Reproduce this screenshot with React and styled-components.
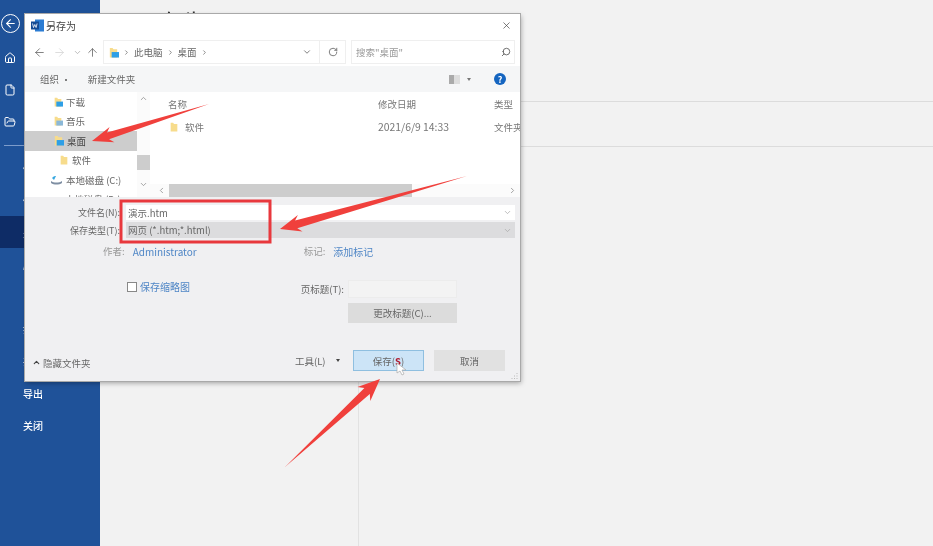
import React from "react";
import styled, { createGlobalStyle } from "styled-components";
import {
  ArrowLeft,
  ArrowRight,
  ArrowUp,
  ChevronDown,
  ChevronLeft,
  ChevronRight,
  ChevronUp,
  File,
  FolderOpen,
  Home,
  RotateCw,
  Search,
  X
} from "lucide-react";

const GlobalStyle = createGlobalStyle`
  html, body {
    margin: 0;
    padding: 0;
    background: #f2f2f2;
  }
  * {
    box-sizing: border-box;
  }
`;

const Page = styled.div`
  position: relative;
  display: flex;
  width: 933px;
  height: 546px;
  overflow: hidden;
  background: #f2f2f2;
  font-family: "Noto Sans CJK SC", "Liberation Sans", sans-serif;
  filter: blur(0.45px);
`;

/* word backstage, mostly hidden by the dialog */
const Sidebar = styled.nav`
  display: flex;
  flex-direction: column;
  flex: 0 0 100px;
  padding-top: 12px;
  background: #1f5299;
  color: #fff;
`;

const BackButton = styled.div`
  display: flex;
  align-items: center;
  justify-content: center;
  width: 19px;
  height: 19px;
  margin: 2px 0 9px 1px;
  border: 1.5px solid #fff;
  border-radius: 50%;
`;

const SideItem = styled.div`
  display: flex;
  align-items: center;
  flex: 0 0 32px;
  margin-top: ${({ $gap }) => $gap || 0}px;
  padding-left: 4px;
  gap: 13px;
  font-size: 10px;
  font-weight: 500;
  background: ${({ $active }) => ($active ? "#0e2c66" : "transparent")};
`;

const SideLabel = styled.span`
  margin-left: ${({ $bare }) => ($bare ? 19 : 0)}px;
`;

const SideRule = styled.div`
  height: 1px;
  margin: 7px 0 6px 4px;
  width: 40px;
  background: #7d9ccb;
`;

const Main = styled.main`
  display: flex;
  flex-direction: column;
  flex: 1;
`;

const MainTitle = styled.h1`
  flex: 0 0 102px;
  margin: 0;
  padding: 7px 0 0 35px;
  font-size: 24px;
  line-height: 30px;
  font-weight: 400;
  color: #333;
  border-bottom: 1px solid #dcdcdc;
`;

const MainStrip = styled.div`
  flex: 0 0 45px;
  border-bottom: 1px solid #dcdcdc;
`;

const MainColumn = styled.div`
  flex: 1;
  width: 259px;
  border-right: 1px solid #e2e2e2;
`;

/* the save-as window floats over the page */
const Dialog = styled.section`
  position: absolute;
  left: 25px;
  top: 14px;
  display: flex;
  flex-direction: column;
  width: 495px;
  height: 367px;
  background: #fff;
  color: #555;
  box-shadow: 0 0 0 1px #a9a9a9, 1px 2px 5px rgba(0, 0, 0, 0.35);
`;

const TitleBar = styled.header`
  display: flex;
  align-items: center;
  flex: 0 0 24px;
  padding: 0 8px 2px 6px;
  font-size: 10px;
  color: #444;
`;

const TitleText = styled.span`
  margin-left: 1px;
  flex: 1;
`;

const AddressRow = styled.div`
  display: flex;
  align-items: center;
  flex: 0 0 28px;
  padding: 0 5px 0 8px;
  color: #666;
`;

const NavIcons = styled.div`
  display: flex;
  align-items: center;
  gap: 7px;
  width: 70px;
`;

const NavTail = styled.div`
  display: flex;
  align-items: center;
  gap: 4px;
`;

const AddressBox = styled.div`
  display: flex;
  align-items: center;
  gap: 4px;
  width: 217px;
  height: 24px;
  padding: 0 7px 0 4px;
  border: 1px solid #efefef;
  font-size: 9.5px;
`;

const Spacer = styled.div`
  flex: 1;
`;

const RefreshBox = styled.div`
  display: flex;
  align-items: center;
  justify-content: center;
  width: 26px;
  height: 24px;
  border: 1px solid #efefef;
  border-left: none;
`;

const SearchBox = styled.div`
  display: flex;
  align-items: center;
  justify-content: space-between;
  width: 164px;
  height: 24px;
  margin-left: 5px;
  padding: 0 3px 0 4px;
  border: 1px solid #efefef;
  font-size: 9.5px;
  color: #999;
`;

const Toolbar = styled.div`
  display: flex;
  align-items: center;
  flex: 0 0 26px;
  padding: 0 14px 0 15px;
  background: #f5f6f7;
  font-size: 9.5px;
  color: #666;
`;

const ToolLabel = styled.span`
  margin-right: 17px;
`;

const ViewIcon = styled.div`
  width: 11px;
  height: 9px;
  margin-right: 7px;
  background: linear-gradient(90deg, #aaa 0 45%, #ddd 45% 100%);
`;

const HelpDot = styled.div`
  display: flex;
  align-items: center;
  justify-content: center;
  width: 12px;
  height: 12px;
  margin-left: 23px;
  border-radius: 50%;
  background: #1565c0;
  color: #fff;
  font-size: 9px;
  font-weight: 700;
`;

const Caret = styled.span`
  width: 0;
  height: 0;
  margin: ${({ $margin }) => $margin || "0"};
  border-left: 2px solid transparent;
  border-right: 2px solid transparent;
  border-top: 3px solid ${({ $color }) => $color || "#777"};
`;

const Browser = styled.div`
  display: flex;
  flex: 0 0 105px;
  overflow: hidden;
`;

const NavPane = styled.div`
  display: flex;
  flex-direction: column;
  flex: 0 0 112px;
  overflow: hidden;
  font-size: 9.5px;
`;

const NavRow = styled.div`
  display: flex;
  align-items: center;
  flex: 0 0 19.5px;
  gap: 3px;
  padding-left: ${({ $indent }) => $indent}px;
  background: ${({ $selected }) => ($selected ? "#cdcdcd" : "transparent")};
  color: ${({ $selected }) => ($selected ? "#444" : "#666")};
  white-space: nowrap;
`;

const VScroll = styled.div`
  display: flex;
  flex-direction: column;
  align-items: center;
  flex: 0 0 13px;
  padding-top: 2px;
  background: #fbfbfb;
  color: #888;
`;

const VThumb = styled.div`
  width: 13px;
  height: 15px;
  margin: 52px 0 10px;
  background: #cdcdcd;
`;

const FileArea = styled.div`
  display: flex;
  flex-direction: column;
  flex: 1;
  min-width: 0;
`;

const FileGrid = styled.div`
  display: grid;
  grid-template-columns: 210px 116px 1fr;
  grid-auto-rows: 23px;
  flex: 1;
  padding: 0 0 0 18px;
  font-size: 9.5px;
  color: #777;
  overflow: hidden;
`;

const HeaderCell = styled.div`
  display: flex;
  align-items: center;
  height: 23px;
  white-space: nowrap;
`;

const RowCell = styled(HeaderCell)`
  gap: 6px;
  font-size: ${({ $size }) => $size || 9.5}px;
  padding-left: ${({ $indent }) => $indent || 0}px;
`;

const HScroll = styled.div`
  display: flex;
  align-items: center;
  flex: 0 0 13px;
  padding: 0 3px 0 7px;
  background: #fbfbfb;
  color: #888;
`;

const HThumb = styled.div`
  width: 244px;
  height: 13px;
  margin: 0 96px 0 3px;
  background: #cdcdcd;
`;

const Form = styled.div`
  display: flex;
  flex-direction: column;
  flex: 1;
  padding: 8px 5px 10px 0;
  background: #f0f0f2;
  font-size: 9.5px;
  color: #666;
`;

const FieldRow = styled.div`
  display: grid;
  grid-template-columns: 95px 1fr;
  column-gap: 6px;
  align-items: center;
  margin-bottom: 2px;
`;

const FieldLabel = styled.label`
  font-size: 9px;
  text-align: right;
  white-space: nowrap;
`;

const FieldValue = styled.div`
  display: flex;
  align-items: center;
  justify-content: space-between;
  height: ${({ $tall }) => ($tall ? 16 : 15)}px;
  padding: 0 3px 0 2px;
  background: ${({ $muted }) => ($muted ? "#dcdcde" : "#fff")};
  color: #666;
  font-size: 9.5px;
`;

const MetaRow = styled.div`
  display: flex;
  align-items: center;
  height: 14px;
  margin: 4px 0 0 78px;
`;

const MetaLabel = styled.span`
  color: #999;
  margin-right: ${({ $gap }) => $gap}px;
`;

const LinkText = styled.span`
  color: #4f86c6;
  font-size: 10px;
  margin-right: ${({ $gap }) => $gap || 0}px;
`;

const Options = styled.div`
  display: flex;
  align-items: flex-start;
  margin-top: 22px;
  padding-left: 102px;
`;

const ThumbOption = styled.div`
  display: flex;
  align-items: center;
  gap: 3px;
  width: 174px;
  height: 13px;
`;

const CheckBox = styled.div`
  width: 10px;
  height: 10px;
  background: #fff;
  border: 1px solid #888;
`;

const PageTitleBlock = styled.div`
  display: flex;
  flex-direction: column;
  align-items: flex-end;
  width: 156px;
  gap: 5px;
`;

const PageTitleRow = styled.div`
  display: flex;
  align-items: center;
  gap: 4px;
  white-space: nowrap;
`;

const PageTitleInput = styled.div`
  width: 109px;
  height: 18px;
  background: #f3f3f3;
  border: 1px solid #ececec;
`;

const ChangeButton = styled.div`
  display: flex;
  align-items: center;
  justify-content: center;
  width: 109px;
  height: 20px;
  background: #dcdcdc;
`;

const Footer = styled.footer`
  display: flex;
  align-items: center;
  margin-top: auto;
  padding-left: 7px;
`;

const HideFolders = styled.div`
  display: flex;
  align-items: center;
  gap: 2px;
  width: 263px;
  padding-top: 4px;
`;

const ToolsMenu = styled.div`
  display: flex;
  align-items: center;
  gap: 10px;
  width: 58px;
`;

const ActionButton = styled.div`
  position: relative;
  display: flex;
  align-items: center;
  justify-content: center;
  width: 71px;
  height: 21px;
  margin-right: 10px;
  background: ${({ $primary }) => ($primary ? "#cce4f7" : "#e1e1e1")};
  border: 1px solid ${({ $primary }) => ($primary ? "#8fbfe0" : "#e1e1e1")};
`;

const HotKey = styled.span`
  color: #b0182c;
  font-weight: 700;
`;

/* pointer sits on top of the save button */
const Pointer = styled.svg`
  position: absolute;
  left: 42px;
  top: 11px;
`;

const Grip = styled.svg`
  position: absolute;
  right: 2px;
  bottom: 2px;
`;

const Annotations = styled.svg`
  position: absolute;
  left: 0;
  top: 0;
`;

const FolderGlyph = ({ size = 10, badge }) => (
  <svg width={size} height={size} viewBox="0 0 12 12" style={{ flex: "none" }}>
    <path d="M2 1h3l1 1.5h4v9H2z" fill="#f7dc8c" />
    {badge && <rect x="4" y="5.5" width="8" height="6" fill={badge} />}
  </svg>
);

const WordGlyph = () => (
  <svg width="14" height="13" viewBox="0 0 14 13" style={{ flex: "none" }}>
    <rect x="4" y="0.5" width="9" height="12" fill="#2b7cd3" />
    <rect x="0" y="2.5" width="8" height="8" fill="#124a94" />
    <path d="M1.5 4.5l1 4 1.3-3 1.3 3 1-4" fill="none" stroke="#fff" strokeWidth="0.8" />
  </svg>
);

const DriveGlyph = () => (
  <svg width="13" height="10" viewBox="0 0 13 10" style={{ flex: "none" }}>
    <path d="M1 6c3 2 8 2 11 0v2c-3 2-8 2-11 0z" fill="#7f8fa3" />
    <path d="M2 3c2-2 3-2 4-2L4 5z" fill="#35a7e0" />
  </svg>
);

// tapered annotation arrow, narrow at the tail and with a barbed head at the tip
const arrowPoints = ([tx, ty], [hx, hy], head, neck, barb) => {
  const len = Math.hypot(hx - tx, hy - ty);
  const ux = (hx - tx) / len;
  const uy = (hy - ty) / len;
  const nx = -uy;
  const ny = ux;
  const bx = hx - ux * head;
  const by = hy - uy * head;
  const nbx = hx - ux * head * 0.8;
  const nby = hy - uy * head * 0.8;
  return [
    [tx, ty],
    [nbx + nx * neck, nby + ny * neck],
    [bx + nx * barb, by + ny * barb],
    [hx, hy],
    [bx - nx * barb, by - ny * barb],
    [nbx - nx * neck, nby - ny * neck]
  ]
    .map(p => p.map(v => v.toFixed(1)).join(","))
    .join(" ");
};

const arrows = [
  { from: [209, 104], to: [92, 141], head: 21, neck: 3.5, barb: 8 },
  { from: [467, 176], to: [280, 229], head: 21, neck: 4, barb: 8.5 },
  { from: [285, 467], to: [380, 379], head: 22, neck: 4, barb: 9.5 }
];

const sideItems = [
  { label: "信息" },
  { label: "保存" },
  { label: "另存为", active: true },
  { label: "历史记录" },
  { label: "打印", gap: 32 },
  { label: "共享" },
  { label: "导出", gap: 1 },
  { label: "关闭" }
];

export default function App() {
  return (
    <Page>
      <GlobalStyle />
      <Sidebar>
        <BackButton>
          <ArrowLeft size={13} strokeWidth={2} />
        </BackButton>
        <SideItem>
          <Home size={12} />
          <span>开始</span>
        </SideItem>
        <SideItem>
          <File size={12} />
          <span>新建</span>
        </SideItem>
        <SideItem>
          <FolderOpen size={12} />
          <span>打开</span>
        </SideItem>
        <SideRule />
        {sideItems.map(item => (
          <SideItem key={item.label} $active={item.active} $gap={item.gap}>
            <SideLabel $bare>{item.label}</SideLabel>
          </SideItem>
        ))}
      </Sidebar>
      <Main>
        <MainTitle>另存为</MainTitle>
        <MainStrip />
        <MainColumn />
      </Main>

      <Dialog>
        <TitleBar>
          <WordGlyph />
          <TitleText>另存为</TitleText>
          <X size={11} strokeWidth={1.5} />
        </TitleBar>
        <AddressRow>
          <NavIcons>
            <ArrowLeft size={13} strokeWidth={1.5} />
            <ArrowRight size={13} strokeWidth={1.5} color="#d5d5d5" />
            <NavTail>
              <ChevronDown size={9} color="#aaa" />
              <ArrowUp size={13} strokeWidth={1.5} />
            </NavTail>
          </NavIcons>
          <AddressBox>
            <FolderGlyph size={11} badge="#2e9fe6" />
            <ChevronRight size={7} strokeWidth={2.5} />
            <span>此电脑</span>
            <ChevronRight size={7} strokeWidth={2.5} />
            <span>桌面</span>
            <ChevronRight size={7} strokeWidth={2.5} />
            <Spacer />
            <ChevronDown size={10} />
          </AddressBox>
          <RefreshBox>
            <RotateCw size={10} />
          </RefreshBox>
          <SearchBox>
            <span>搜索"桌面"</span>
            <Search size={10} color="#555" style={{ transform: "scaleX(-1)" }} />
          </SearchBox>
        </AddressRow>
        <Toolbar>
          <ToolLabel>组织 ·</ToolLabel>
          <ToolLabel>新建文件夹</ToolLabel>
          <Spacer />
          <ViewIcon />
          <Caret />
          <HelpDot>?</HelpDot>
        </Toolbar>
        <Browser>
          <NavPane>
            <NavRow $indent={28}>
              <FolderGlyph size={10} badge="#2e9fe6" />
              <span>下载</span>
            </NavRow>
            <NavRow $indent={28}>
              <FolderGlyph size={10} badge="#8bb8d8" />
              <span>音乐</span>
            </NavRow>
            <NavRow $indent={28} $selected>
              <FolderGlyph size={11} badge="#2e9fe6" />
              <span>桌面</span>
            </NavRow>
            <NavRow $indent={34}>
              <FolderGlyph size={10} />
              <span>软件</span>
            </NavRow>
            <NavRow $indent={25}>
              <DriveGlyph />
              <span>本地磁盘 (C:)</span>
            </NavRow>
            <NavRow $indent={40}>
              <span>本地磁盘 (D:)</span>
            </NavRow>
          </NavPane>
          <VScroll>
            <ChevronUp size={9} />
            <VThumb />
            <ChevronDown size={9} />
          </VScroll>
          <FileArea>
            <FileGrid>
              <HeaderCell>名称</HeaderCell>
              <HeaderCell>修改日期</HeaderCell>
              <HeaderCell>类型</HeaderCell>
              <RowCell $indent={1}>
                <FolderGlyph size={10} />
                软件
              </RowCell>
              <RowCell $size={10.4}>2021/6/9 14:33</RowCell>
              <RowCell>文件夹</RowCell>
            </FileGrid>
            <HScroll>
              <ChevronLeft size={9} />
              <HThumb />
              <ChevronRight size={9} />
            </HScroll>
          </FileArea>
        </Browser>
        <Form>
          <FieldRow>
            <FieldLabel>文件名(N):</FieldLabel>
            <FieldValue>
              演示.htm
              <ChevronDown size={9} color="#aaa" />
            </FieldValue>
          </FieldRow>
          <FieldRow>
            <FieldLabel>保存类型(T):</FieldLabel>
            <FieldValue $muted $tall>
              网页 (*.htm;*.html)
              <ChevronDown size={9} color="#aaa" />
            </FieldValue>
          </FieldRow>
          <MetaRow>
            <MetaLabel $gap={8}>作者:</MetaLabel>
            <LinkText $gap={107}>Administrator</LinkText>
            <MetaLabel $gap={8}>标记:</MetaLabel>
            <LinkText>添加标记</LinkText>
          </MetaRow>
          <Options>
            <ThumbOption>
              <CheckBox />
              <LinkText>保存缩略图</LinkText>
            </ThumbOption>
            <PageTitleBlock>
              <PageTitleRow>
                <span>页标题(T):</span>
                <PageTitleInput />
              </PageTitleRow>
              <ChangeButton>更改标题(C)...</ChangeButton>
            </PageTitleBlock>
          </Options>
          <Footer>
            <HideFolders>
              <ChevronUp size={9} strokeWidth={3} color="#444" />
              <span>隐藏文件夹</span>
            </HideFolders>
            <ToolsMenu>
              <span>工具(L)</span>
              <Caret $color="#444" />
            </ToolsMenu>
            <ActionButton $primary>
              保存(<HotKey>S</HotKey>)
              <Pointer width="11" height="14" viewBox="0 0 11 14">
                <path d="M1 1v10l3-2 2 4 2-1-2-4h4z" fill="#fff" stroke="#aaa" strokeWidth="0.7" />
              </Pointer>
            </ActionButton>
            <ActionButton>取消</ActionButton>
          </Footer>
        </Form>
        <Grip width="7" height="7" viewBox="0 0 7 7">
          <path d="M6 1v1M6 3.5v1M3.5 3.5v1M6 6v1M3.5 6v1M1 6v1" stroke="#bbb" strokeWidth="1" />
        </Grip>
      </Dialog>

      <Annotations width="933" height="546" viewBox="0 0 933 546">
        <rect x="121" y="201" width="149" height="41" fill="none" stroke="#e8383d" strokeWidth="3" />
        {arrows.map(arrow => (
          <polygon
            key={arrow.to.join()}
            points={arrowPoints(arrow.from, arrow.to, arrow.head, arrow.neck, arrow.barb)}
            fill="#f0403c"
          />
        ))}
      </Annotations>
    </Page>
  );
}
